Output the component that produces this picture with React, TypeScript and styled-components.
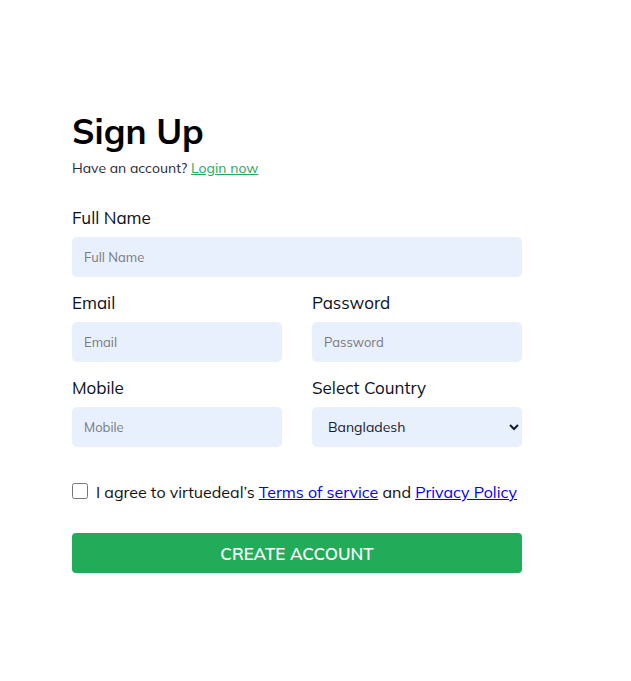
import React from "react";
import styled, { createGlobalStyle } from "styled-components";

const Global = createGlobalStyle`
  body {
    margin: 8px;
    background: #ffffff;
    font-family: "Mulish", "Lato", "Noto Sans", sans-serif;
    color: #111827;
  }
  * { box-sizing: border-box; }
`;

const Page = styled.div`
  padding: 101px 0 0 64px;
`;

const Form = styled.form`
  width: 450px;
  display: flex;
  flex-direction: column;
`;

const Title = styled.h1`
  margin: 0;
  font-size: 35px;
  line-height: 44px;
  font-weight: 700;
  color: #000;
`;

const Sub = styled.p`
  margin: 5px 0 0;
  font-size: 14px;
  line-height: 20px;
  color: #1f2937;
`;

const GreenLink = styled.a`
  color: #22ac5a;
  text-decoration: underline;
`;

const Fields = styled.div`
  margin-top: 29px;
  display: grid;
  grid-template-columns: 1fr 1fr;
  column-gap: 30px;
  row-gap: 15px;
`;

const Field = styled.div<{ $wide?: boolean }>`
  display: flex;
  flex-direction: column;
  gap: 8px;
  grid-column: ${(p) => (p.$wide ? "1 / span 2" : "auto")};
`;

const Label = styled.label`
  font-size: 17px;
  line-height: 22px;
  color: #0b1022;
`;

const Input = styled.input`
  height: 40px;
  border: none;
  border-radius: 5px;
  background: #e8f0fe;
  padding: 0 12px;
  font-family: inherit;
  font-size: 13px;
  color: #111;
  outline: none;
  &::placeholder {
    color: #7a7a7a;
  }
`;

const Select = styled.select`
  height: 40px;
  border: none;
  border-radius: 5px;
  background: #e8f0fe;
  padding: 0 8px 0 12px;
  font-family: inherit;
  font-size: 14px;
  color: #1a1a2e;
  outline: none;
`;

const Agree = styled.div`
  margin-top: 34px;
  display: flex;
  align-items: center;
  gap: 8px;
  font-size: 16px;
  line-height: 22px;
  color: #111;
`;

const Check = styled.input`
  width: 16px;
  height: 16px;
  margin: 0 0 2px;
`;

const BlueLink = styled.a`
  color: #0000ee;
  text-decoration: underline;
`;

const Button = styled.button`
  margin-top: 30px;
  height: 40px;
  border: none;
  border-radius: 4px;
  background: #22ac5a;
  color: #fff;
  font-family: inherit;
  font-size: 17px;
  font-weight: 600;
  text-transform: uppercase;
  cursor: pointer;
`;

export default function App() {
  return (
    <>
      <Global />
      <Page>
        <Form onSubmit={(e) => e.preventDefault()}>
          <Title>Sign Up</Title>
          <Sub>
            Have an account? <GreenLink href="#">Login now</GreenLink>
          </Sub>
          <Fields>
            <Field $wide>
              <Label>Full Name</Label>
              <Input placeholder="Full Name" />
            </Field>
            <Field>
              <Label>Email</Label>
              <Input placeholder="Email" />
            </Field>
            <Field>
              <Label>Password</Label>
              <Input type="password" placeholder="Password" />
            </Field>
            <Field>
              <Label>Mobile</Label>
              <Input placeholder="Mobile" />
            </Field>
            <Field>
              <Label>Select Country</Label>
              <Select defaultValue="Bangladesh">
                <option>Bangladesh</option>
                <option>India</option>
                <option>Pakistan</option>
              </Select>
            </Field>
          </Fields>
          <Agree>
            <Check type="checkbox" />
            <span>
              I agree to virtuedeal’s <BlueLink href="#">Terms of service</BlueLink> and{" "}
              <BlueLink href="#">Privacy Policy</BlueLink>
            </span>
          </Agree>
          <Button type="submit">Create Account</Button>
        </Form>
      </Page>
    </>
  );
}
